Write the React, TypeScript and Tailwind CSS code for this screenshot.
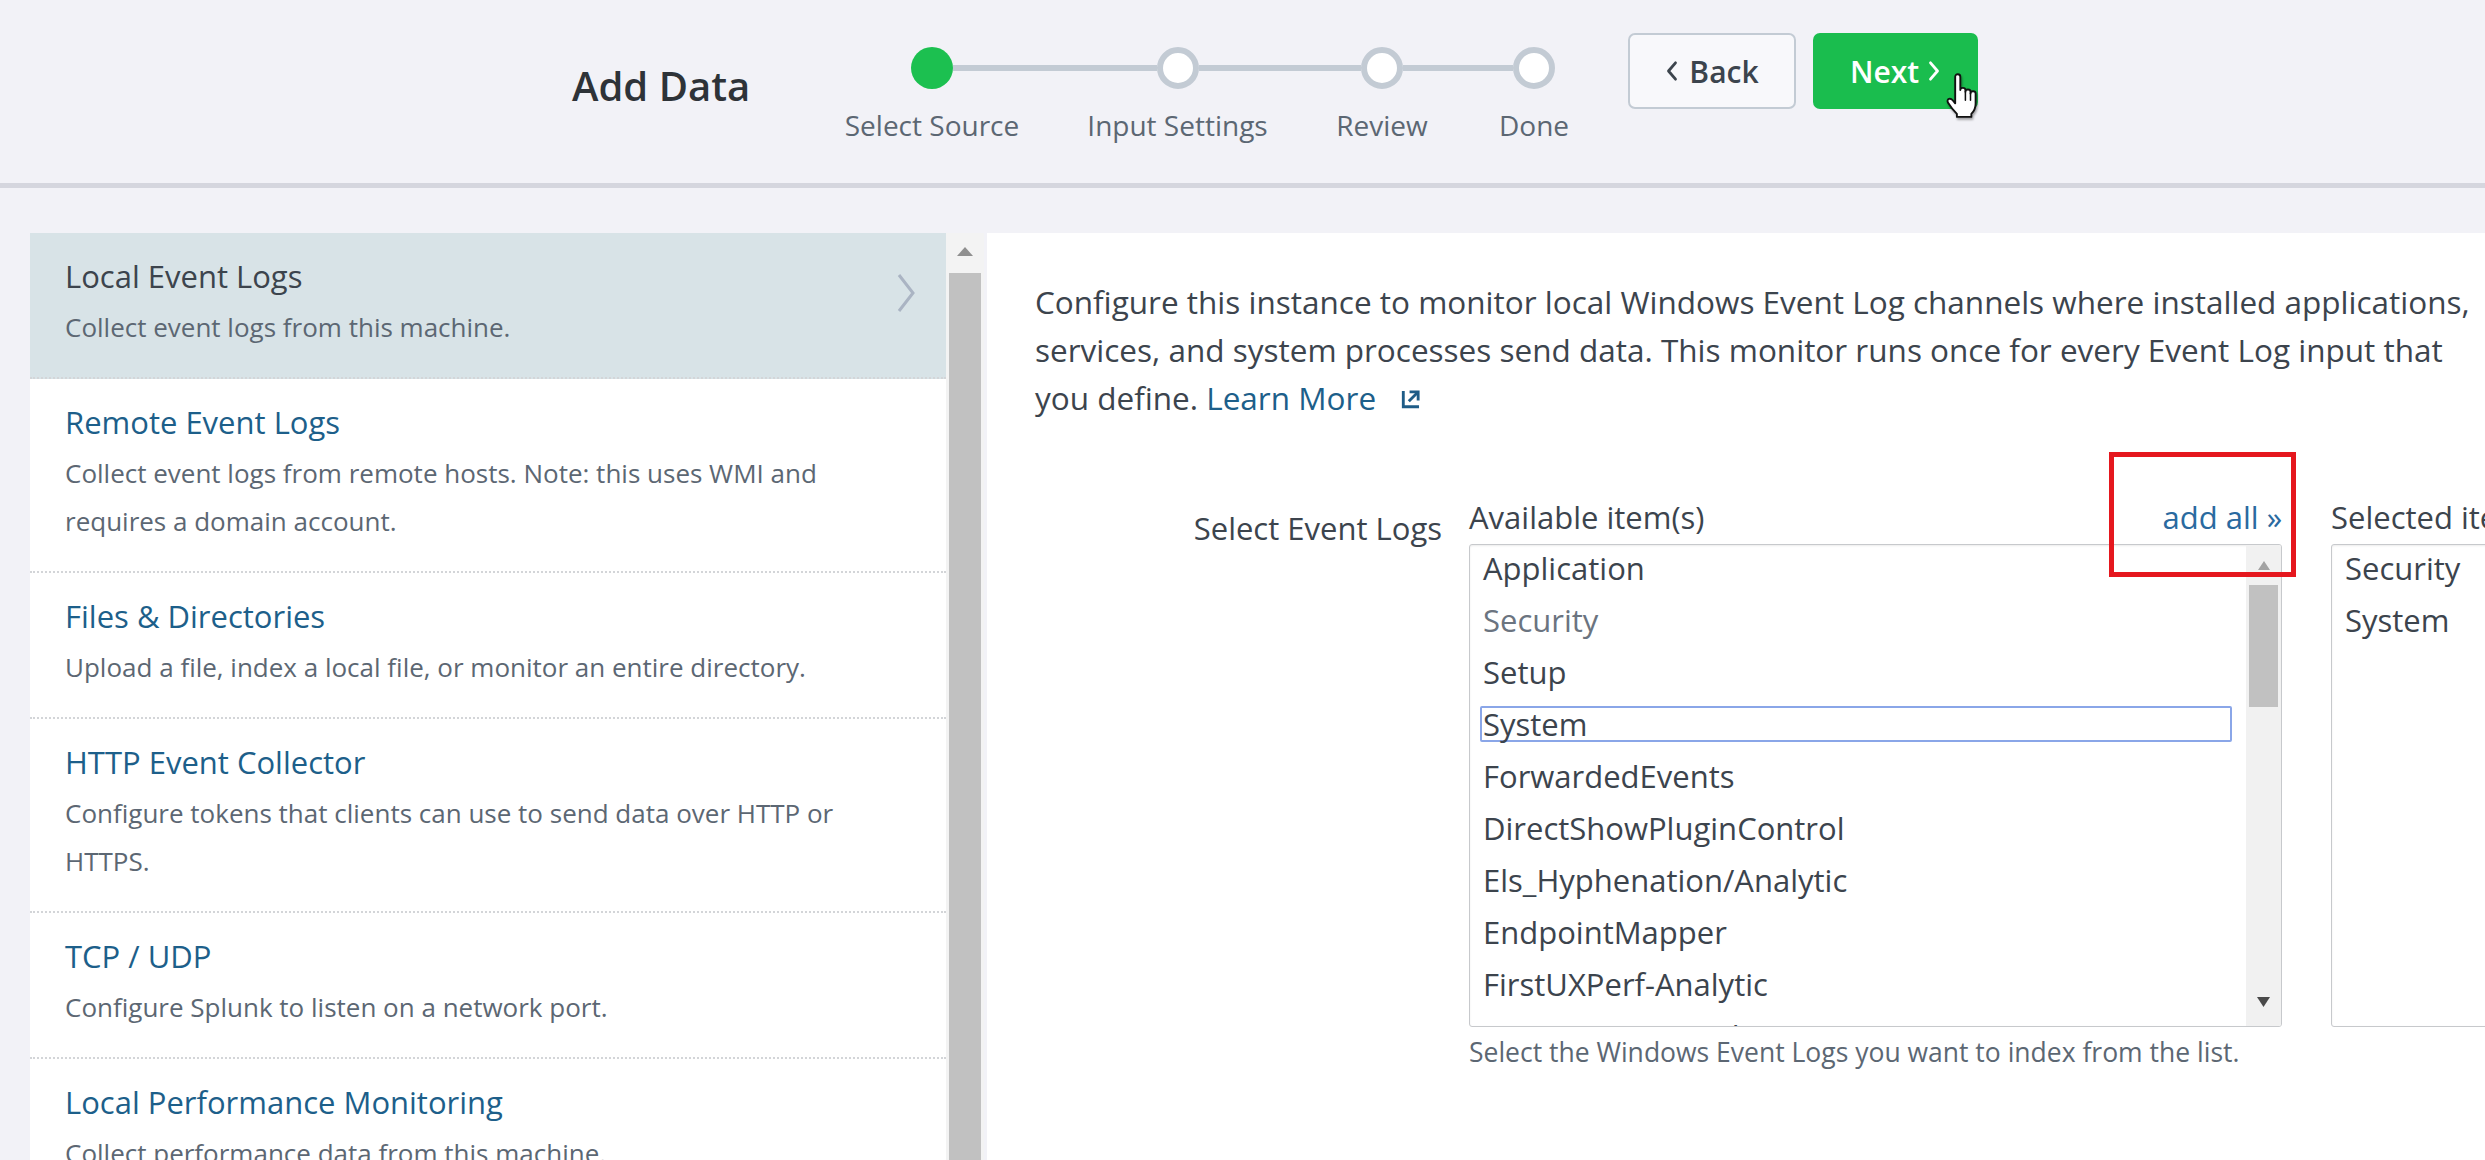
import { useState } from "react";

const sources = [
  { title: "Local Event Logs", desc: ["Collect event logs from this machine."] },
  {
    title: "Remote Event Logs",
    desc: [
      "Collect event logs from remote hosts. Note: this uses WMI and",
      "requires a domain account.",
    ],
  },
  {
    title: "Files & Directories",
    desc: ["Upload a file, index a local file, or monitor an entire directory."],
  },
  {
    title: "HTTP Event Collector",
    desc: [
      "Configure tokens that clients can use to send data over HTTP or",
      "HTTPS.",
    ],
  },
  { title: "TCP / UDP", desc: ["Configure Splunk to listen on a network port."] },
  {
    title: "Local Performance Monitoring",
    desc: ["Collect performance data from this machine."],
  },
];

const steps = [
  { label: "Select Source", width: "w-[246px]" },
  { label: "Input Settings", width: "w-[245px]" },
  { label: "Review", width: "w-[164px]" },
  { label: "Done", width: "w-[140px]" },
];

const available = [
  "Application",
  "Security",
  "Setup",
  "System",
  "ForwardedEvents",
  "DirectShowPluginControl",
  "Els_Hyphenation/Analytic",
  "EndpointMapper",
  "FirstUXPerf-Analytic",
  "AMSI/Operational",
];

const selectedLogs = ["Security", "System"];

const Chevron = ({ dir, className }: { dir: "left" | "right"; className?: string }) => (
  <svg viewBox="0 0 12 20" className={className} fill="none" stroke="currentColor" strokeWidth={2.4} strokeLinecap="round" strokeLinejoin="round">
    {dir === "left" ? <path d="M9 3 L3 10 L9 17" /> : <path d="M3 3 L9 10 L3 17" />}
  </svg>
);

const HandCursor = () => (
  <svg viewBox="0 0 20 27" className="w-[34px] h-[46px]" style={{ filter: "drop-shadow(1px 2px 1px rgba(0,0,0,0.35))" }}>
    <path
      d="M6 2.2 C6 1.3 6.7 0.7 7.5 0.7 C8.3 0.7 9 1.3 9 2.2 V10 C9 9.2 9.7 8.7 10.5 8.7 C11.3 8.7 12 9.2 12 10 V11 C12 10.2 12.7 9.7 13.5 9.7 C14.3 9.7 15 10.2 15 11 V12 C15 11.2 15.7 10.7 16.5 10.7 C17.3 10.7 18 11.2 18 12 V18 C18 21 16.5 23 15.5 24 V25.8 H7 V24 C5.5 22.5 3 19.5 1.8 17.5 C1.2 16.5 1.5 15.5 2.3 15.2 C3.1 14.9 3.9 15.3 4.5 16 L6 17.8 Z"
      fill="#fff"
      stroke="#111"
      strokeWidth={1.1}
      strokeLinejoin="round"
    />
    <path d="M12 11 V16 M15 12 V16" stroke="#111" strokeWidth={0.9} strokeLinecap="round" />
  </svg>
);

const ExternalIcon = () => (
  <svg viewBox="0 0 20 20" className="w-[22px] h-[22px]" fill="none" stroke="#1e5c87" strokeWidth={2.6}>
    <path d="M3 4 V17 H16" strokeLinecap="square" />
    <path d="M8 12 L16 4" />
    <path d="M10 3.5 H16.5 V10" strokeLinecap="square" />
  </svg>
);

const Header = () => (
  <div className="relative h-[188px] bg-[#f2f2f7] border-b-[5px] border-[#d5d6de] flex items-start pl-[572px]">
    <h1 className="w-[237px] shrink-0 mt-[60px] text-[40px] leading-[52px] font-semibold text-[#2e3338] whitespace-nowrap">
      Add Data
    </h1>

    <div className="flex shrink-0 mt-[47px]">
      {steps.map((step, i) => (
        <div key={step.label} className={`${step.width} shrink-0 flex flex-col items-center`}>
          <div className="flex items-center w-full h-[42px]">
            <div className={`flex-1 h-[6px] ${i > 0 ? "bg-[#c3cbd4]" : ""}`} />
            {i === 0 ? (
              <div className="w-[42px] h-[42px] rounded-full bg-[#1cc050]" />
            ) : (
              <div className="w-[42px] h-[42px] rounded-full border-[6px] border-[#c3cbd4] bg-white" />
            )}
            <div className={`flex-1 h-[6px] ${i < steps.length - 1 ? "bg-[#c3cbd4]" : ""}`} />
          </div>
          <div className="mt-[18px] text-[28px] leading-[36px] text-[#5c6773] whitespace-nowrap">
            {step.label}
          </div>
        </div>
      ))}
    </div>

    <div className="flex shrink-0 gap-[17px] mt-[33px] ml-[24px]">
      <button className="w-[168px] h-[76px] rounded-[7px] border-2 border-[#c3cbd4] bg-[#f8f8fb] text-[#3c444d] text-[30px] font-semibold flex items-center justify-center gap-[10px]">
        <Chevron dir="left" className="w-[14px] h-[24px]" />
        Back
      </button>
      <button className="relative w-[165px] h-[76px] rounded-[7px] bg-[#1abd4e] text-white text-[30px] font-semibold flex items-center justify-center gap-[8px]">
        Next
        <Chevron dir="right" className="w-[14px] h-[24px]" />
        <span className="absolute left-[132px] top-[40px]">
          <HandCursor />
        </span>
      </button>
    </div>
  </div>
);

const Sidebar = () => (
  <div className="flex w-[954px] h-[927px] shrink-0">
    <div className="w-[916px] bg-white overflow-hidden">
      {sources.map((s, i) => (
        <div
          key={s.title}
          className={`flex justify-between pl-[35px] pr-[30px] pt-[24px] pb-[26px] border-b-2 border-dotted border-[#d3d5d8] ${
            i === 0 ? "bg-[#d8e3e7]" : "bg-white"
          }`}
        >
          <div>
            <div
              className={`text-[31px] leading-[38px] whitespace-nowrap ${
                i === 0 ? "text-[#3c444d]" : "text-[#1d5f8a]"
              }`}
            >
              {s.title}
            </div>
            <div className="mt-[8px] text-[26px] leading-[48px] text-[#5c6773]">
              {s.desc.map((line) => (
                <div key={line} className="whitespace-nowrap">
                  {line}
                </div>
              ))}
            </div>
          </div>
          {i === 0 && (
            <svg viewBox="0 0 20 42" className="w-[20px] h-[42px] mt-[15px]" fill="none" stroke="#aab4c3" strokeWidth={3}>
              <path d="M3 3 L17 21 L3 39" />
            </svg>
          )}
        </div>
      ))}
    </div>
    <div className="w-[38px] bg-[#f3f3f3] flex flex-col">
      <div className="h-[36px] flex items-center justify-center">
        <svg width="16" height="9" viewBox="0 0 16 9">
          <path d="M0 9 L8 0 L16 9 Z" fill="#8f8f8f" />
        </svg>
      </div>
      <div className="mt-[4px] mx-[3px] flex-1 bg-[#c1c1c1]" />
    </div>
  </div>
);

const ListBox = ({ items, scroll }: { items: string[]; scroll?: boolean }) => (
  <div className="mt-[5px] h-[483px] border border-[#c7c9cc] rounded-[3px] bg-white flex overflow-hidden shadow-[inset_0_1px_2px_rgba(0,0,0,0.08)]">
    <div className={`flex-1 flex flex-col gap-[6px] ${scroll ? "pl-[10px] pr-[14px]" : "pl-[10px]"}`}>
      {items.map((item) => (
        <div key={item} className="h-[46px] shrink-0 flex items-center text-[31px] whitespace-nowrap">
          {scroll && item === "System" ? (
            <div className="w-full h-[36px] border-2 border-[#8aa6e8] rounded-[2px] flex items-center pl-[1px] text-[#3c444d]">
              {item}
            </div>
          ) : (
            <span
              className={`px-[3px] ${
                scroll && item === "Security" ? "text-[#6b7480]" : "text-[#3c444d]"
              }`}
            >
              {item}
            </span>
          )}
        </div>
      ))}
    </div>
    {scroll && (
      <div className="w-[35px] shrink-0 bg-[#f1f1f1] flex flex-col">
        <div className="h-[40px] flex items-center justify-center">
          <svg width="12" height="9" viewBox="0 0 12 9">
            <path d="M0 9 L6 0 L12 9 Z" fill="#a3a3a3" />
          </svg>
        </div>
        <div className="mx-[3px] h-[122px] bg-[#c1c1c1]" />
        <div className="flex-1" />
        <div className="h-[48px] flex items-center justify-center">
          <svg width="13" height="10" viewBox="0 0 13 10">
            <path d="M0 0 L13 0 L6.5 10 Z" fill="#4a4a4a" />
          </svg>
        </div>
      </div>
    )}
  </div>
);

const Panel = () => (
  <div className="w-[1800px] h-[928px] shrink-0 bg-white pl-[48px] pt-[45px] text-[#3c444d]">
    <p className="text-[31.5px] leading-[48px] whitespace-nowrap">
      Configure this instance to monitor local Windows Event Log channels where installed applications,
      <br />
      services, and system processes send data. This monitor runs once for every Event Log input that
      <br />
      you define. <span className="text-[#1d5f8a]">Learn More</span>
      <span className="inline-block align-middle ml-[24px] -mt-[6px]">
        <ExternalIcon />
      </span>
    </p>

    <div className="flex mt-[73px]">
      <div className="w-[407px] shrink-0 pt-[11px] text-right text-[31px] leading-[44px] whitespace-nowrap">
        Select Event Logs
      </div>

      <div className="relative shrink-0 ml-[27px] w-[813px]">
        <div className="h-[44px] flex items-center justify-between text-[31px] leading-[44px] whitespace-nowrap">
          <span>Available item(s)</span>
          <span className="text-[#2a6aa0]">add all »</span>
        </div>
        <ListBox items={available} scroll />
        <div className="mt-[7px] text-[26.5px] leading-[36px] text-[#5c6773] whitespace-nowrap">
          Select the Windows Event Logs you want to index from the list.
        </div>
        <div className="absolute -top-[43px] -right-[14px] w-[187px] h-[125px] border-[5px] border-[#e5171e]" />
      </div>

      <div className="shrink-0 ml-[49px] w-[420px]">
        <div className="h-[44px] flex items-center text-[31px] leading-[44px] whitespace-nowrap">
          Selected item(s)
        </div>
        <ListBox items={selectedLogs} />
      </div>
    </div>
  </div>
);

export default function App() {
  const [ready] = useState(true);
  return (
    <div className="w-[2485px] h-[1160px] overflow-hidden bg-[#f2f2f7] font-['Open_Sans',sans-serif]">
      {ready && <Header />}
      <div className="flex pl-[30px] pt-[45px] gap-[3px]">
        <Sidebar />
        <Panel />
      </div>
    </div>
  );
}
